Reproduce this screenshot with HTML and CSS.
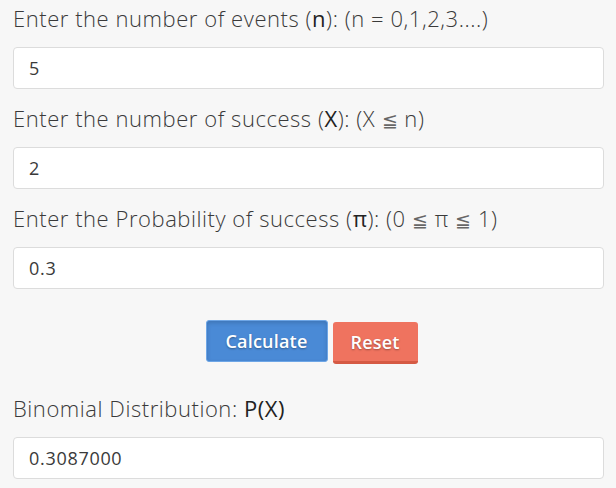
FILE: index.html
```html
<!DOCTYPE html>
<html lang="en">
<head>
    <meta charset="UTF-8">
    <meta name="viewport" content="width=device-width, initial-scale=1.0">
    <title>Binomial Distribution Calculator</title>
    <link rel="stylesheet" href="styles.css">
</head>
<body>
    <div class="calc">
        <div class="field">
            <label class="field-label" for="events">Enter the number of events (<b>n</b>): (n = 0,1,2,3....)</label>
            <input class="field-input" id="events" type="text" value="5">
        </div>
        <div class="field">
            <label class="field-label" for="success">Enter the number of success (<b>X</b>): (X <span class="sym">≦</span> n)</label>
            <input class="field-input" id="success" type="text" value="2">
        </div>
        <div class="field">
            <label class="field-label" for="prob">Enter the Probability of success (<b>π</b>): (0 <span class="sym">≦</span> π <span class="sym">≦</span> 1)</label>
            <input class="field-input" id="prob" type="text" value="0.3">
        </div>
        <div class="actions">
            <button class="btn btn-calc" type="button">Calculate</button>
            <button class="btn btn-reset" type="reset">Reset</button>
        </div>
        <div class="field result">
            <label class="field-label" for="result">Binomial Distribution: <b>P(X)</b></label>
            <input class="field-input" id="result" type="text" value="0.3087000" readonly>
        </div>
    </div>
</body>
</html>
```

FILE: styles.css
```css
body {
    margin: 0;
    background-color: #f7f7f7;
    font-family: "Open Sans", "DejaVu Sans", sans-serif;
    color: #333;
}
.calc {
    padding: 2px 12px 0 13px;
}
.field {
    margin-bottom: 13px;
}
.field-label {
    display: block;
    height: 32px;
    font-size: 22px;
    font-weight: 300;
    line-height: 32px;
    letter-spacing: 0.55px;
    color: #3a3a3a;
    margin-bottom: 13px;
}
.field-label b {
    font-weight: 500;
    color: #222;
}
.sym {
    font-family: "DejaVu Sans", sans-serif;
    font-weight: 200;
    font-size: 19px;
    line-height: 1;
    color: #666;
}
.field-input {
    display: block;
    box-sizing: border-box;
    width: 100%;
    height: 42px;
    padding: 0 15px;
    border: 1px solid #dcdcdc;
    border-radius: 4px;
    background-color: white;
    font-family: "Open Sans", sans-serif;
    font-size: 18px;
    letter-spacing: 0.7px;
    color: #3a3a3a;
}
.actions {
    display: flex;
    justify-content: center;
    align-items: flex-start;
    gap: 5px;
    margin: 31px 0 0 6px;
}
.btn {
    box-sizing: border-box;
    height: 42px;
    padding: 0;
    border: none;
    border-radius: 3px;
    color: white;
    font-family: "Open Sans", sans-serif;
    font-size: 18px;
    font-weight: 600;
    letter-spacing: 0.2px;
    text-shadow: 0 1px 2px rgba(0, 0, 0, 0.35);
}
.btn-calc {
    width: 122px;
    background-color: #4a8ad6;
    border: 1px solid #6ea6e6;
    box-shadow: inset 0 2px 4px rgba(0, 0, 0, 0.15);
}
.btn-reset {
    width: 85px;
    margin-top: 2px;
    background-color: #ef735f;
    border-bottom: 3px solid #d55a44;
}
.result {
    margin-top: 28px;
}
```
